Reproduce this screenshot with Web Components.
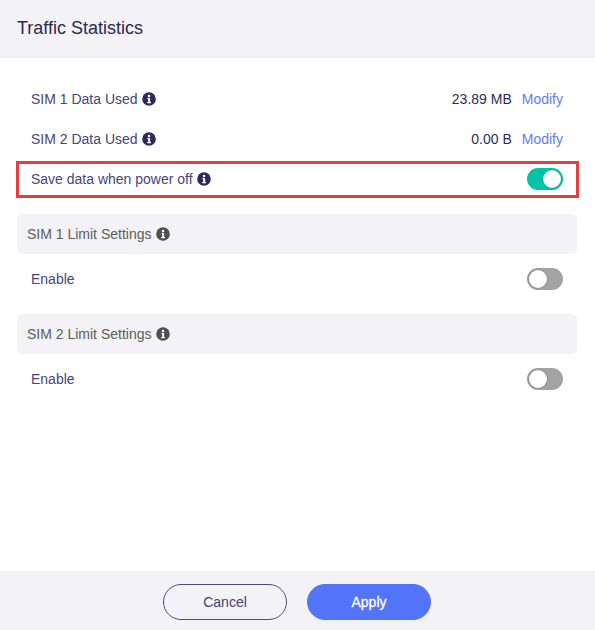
<!DOCTYPE html>
<html>
<head>
<meta charset="utf-8">
<title>Traffic Statistics</title>
<style>
  html,body{margin:0;height:100%}
  body{font-family:"Liberation Sans",Arial,sans-serif;color:#2d2a5e}
</style>
</head>
<body>
<template id="info-tpl">
  <style>
    :host{display:inline-flex;width:14px;height:14px;color:var(--info-color,#2d2a5e)}
    svg{width:14px;height:14px;display:block}
  </style>
  <svg viewBox="0 0 14 14"><circle cx="7" cy="7" r="6.8" fill="currentColor"/><circle cx="7" cy="3.9" r="1.25" fill="#fff"/><path d="M5.500 6h2.600v4h.9v1.200H5.200V10h1V7.200H5.500z" fill="#fff"/></svg>
</template>

<template id="switch-tpl">
  <style>
    :host{display:block;width:36px;height:22px;border-radius:11px;background:#a3a3a3;position:relative}
    :host([on]){background:#00c4a7}
    i{position:absolute;top:2px;left:2px;width:18px;height:18px;border-radius:50%;background:#fff;box-shadow:0 0 2px rgba(0,0,0,.35)}
    :host([on]) i{left:16px}
  </style>
  <i></i>
</template>

<template id="row-tpl">
  <style>
    :host{display:flex;align-items:center;height:40px;padding:0 14px;font-size:14px;color:#47447a;box-sizing:border-box}
    :host([highlight]){height:37px;margin:2px -2px 16px -1px;padding:0 16px 1px 15px;box-shadow:inset 0 0 0 3px #e53e3e}
    .label{display:flex;align-items:center;gap:4px;flex:1}
    .end{display:flex;align-items:center;color:#2e2c55}
    ::slotted(a){color:#5f7cf8;margin-left:10px;text-decoration:none}
  </style>
  <div class="label"><slot name="label"></slot></div>
  <div class="end"><slot></slot></div>
</template>

<template id="section-tpl">
  <style>
    :host{display:flex;align-items:center;gap:4px;height:40px;padding:0 10px;border-radius:5px;background:#f2f2f7;color:#5c5c5c;font-size:14px;--info-color:#4f4f4f}
  </style>
  <slot></slot>
</template>

<template id="panel-tpl">
  <style>
    :host{display:flex;flex-direction:column;width:595px;height:630px;background:#fff}
    header{flex:none;height:58px;box-sizing:border-box;background:#f2f2f7;border-bottom:1px solid #ececf0;display:flex;align-items:center;padding-left:17px;font-size:18px;color:#2b2950}
    main{flex:1;padding:21px 18px 0 17px}
    footer{flex:none;height:59px;box-sizing:border-box;background:#f2f2f7;display:flex;justify-content:center;align-items:flex-start;gap:20px;padding:13px 1px 0 0}
  </style>
  <header><slot name="title"></slot></header>
  <main><slot></slot></main>
  <footer><slot name="actions"></slot></footer>
</template>

<template id="btn-tpl">
  <style>
    :host{display:flex;align-items:center;justify-content:center;width:124px;height:36px;box-sizing:border-box;border-radius:18px;border:1px solid #4d4a7c;color:#44416f;font-size:14px;background:transparent}
    :host([primary]){background:#5274f8;border-color:#5274f8;color:#fff;-webkit-text-stroke:.3px #fff}
  </style>
  <slot></slot>
</template>

<traffic-panel>
  <span slot="title">Traffic Statistics</span>
  <stat-row>
    <span slot="label">SIM 1 Data Used</span><info-icon slot="label"></info-icon>
    <span>23.89 MB</span><a>Modify</a>
  </stat-row>
  <stat-row>
    <span slot="label">SIM 2 Data Used</span><info-icon slot="label"></info-icon>
    <span>0.00 B</span><a>Modify</a>
  </stat-row>
  <stat-row highlight>
    <span slot="label">Save data when power off</span><info-icon slot="label"></info-icon>
    <toggle-switch on></toggle-switch>
  </stat-row>
  <section-bar><span>SIM 1 Limit Settings</span><info-icon></info-icon></section-bar>
  <stat-row style="margin:5px 0 15px">
    <span slot="label">Enable</span>
    <toggle-switch></toggle-switch>
  </stat-row>
  <section-bar><span>SIM 2 Limit Settings</span><info-icon></info-icon></section-bar>
  <stat-row style="margin-top:5px">
    <span slot="label">Enable</span>
    <toggle-switch></toggle-switch>
  </stat-row>
  <pill-button slot="actions">Cancel</pill-button>
  <pill-button slot="actions" primary>Apply</pill-button>
</traffic-panel>

<script>
  // each element just clones its template into an open shadow root
  const reg = (name, tpl) => {
    customElements.define(name, class extends HTMLElement {
      constructor() {
        super();
        this.attachShadow({ mode: "open" }).appendChild(document.getElementById(tpl).content.cloneNode(true));
      }
    });
  };
  reg("info-icon", "info-tpl");
  reg("toggle-switch", "switch-tpl");
  reg("stat-row", "row-tpl");
  reg("section-bar", "section-tpl");
  reg("traffic-panel", "panel-tpl");
  reg("pill-button", "btn-tpl");
</script>
</body>
</html>
